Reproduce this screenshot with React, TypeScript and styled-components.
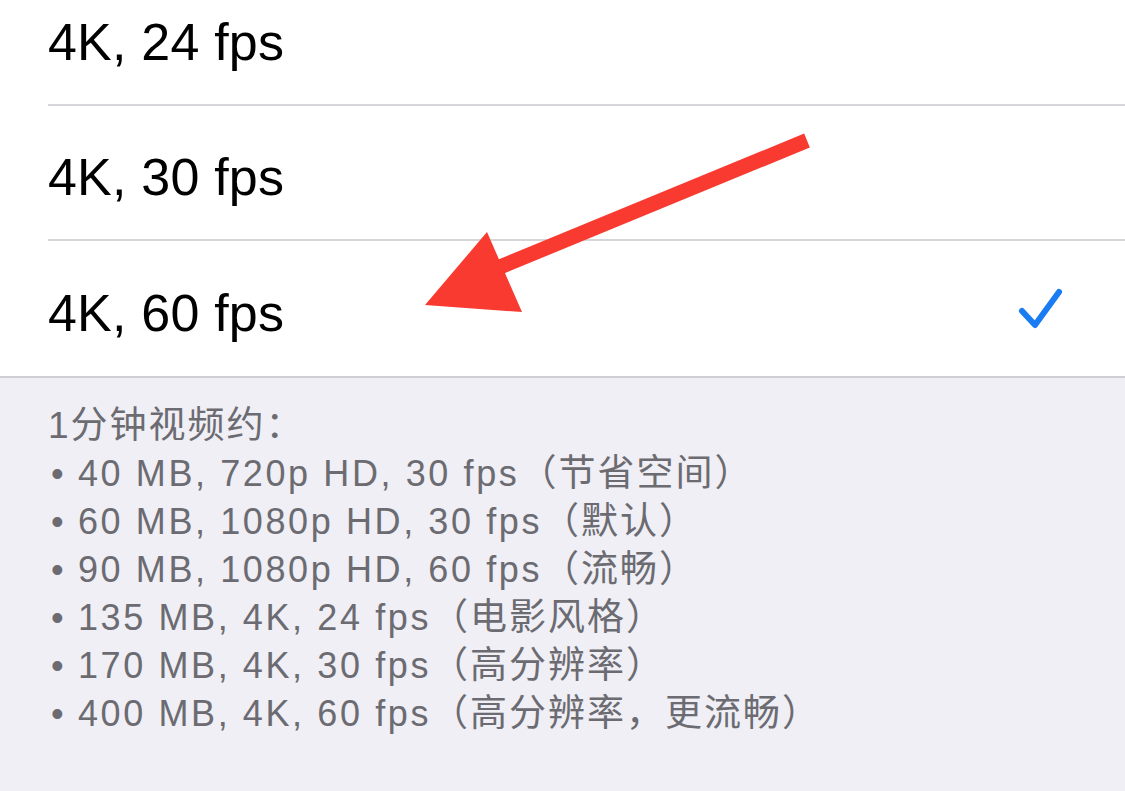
import React from 'react';
import styled, { createGlobalStyle } from 'styled-components';

const GlobalStyle = createGlobalStyle`
  html, body {
    margin: 0;
    padding: 0;
    background: #efeff5;
  }
  body {
    font-family: "Liberation Sans", "Noto Sans CJK SC", sans-serif;
    -webkit-font-smoothing: antialiased;
  }
`;

const Page = styled.div`
  position: relative;
  width: 1125px;
  height: 791px;
  overflow: hidden;
  background: #efeff5;
`;

const Group = styled.div`
  margin-top: -29px;
  background: #ffffff;
  border-bottom: 2px solid #cfcfd3;
`;

const Row = styled.div`
  height: 135px;
  padding-left: 48px;
  display: flex;
`;

const RowInner = styled.div<{ $last?: boolean }>`
  flex: 1;
  display: flex;
  align-items: center;
  justify-content: space-between;
  padding: 8px 62px 0 0;
  box-sizing: border-box;
  border-bottom: ${p => (p.$last ? 'none' : '2px solid #d6d6da')};
`;

const Label = styled.span`
  font-size: 52px;
  color: #000000;
  letter-spacing: 0.2px;
`;

const Check = styled.svg`
  width: 46px;
  height: 42px;
  margin-top: -8px;
`;

const Footer = styled.div`
  padding: 24px 48px 0;
  color: #6b6b71;
  font-size: 36px;
  line-height: 48px;
`;

const FooterLine = styled.div`
  white-space: nowrap;
`;

const Bullet = styled.span`
  display: inline-block;
  width: 30px;
  padding-left: 3px;
  box-sizing: border-box;
`;

const Spec = styled.span`
  letter-spacing: 2.6px;
`;

const Note = styled.span`
  font-size: 37px;
  letter-spacing: 2px;
`;

const ArrowLayer = styled.svg`
  position: absolute;
  left: 0;
  top: 0;
  width: 1125px;
  height: 791px;
  pointer-events: none;
`;

const options = [
  { label: '4K, 24 fps', selected: false },
  { label: '4K, 30 fps', selected: false },
  { label: '4K, 60 fps', selected: true },
];

const notes = [
  { spec: '40 MB, 720p HD, 30 fps', note: '（节省空间）' },
  { spec: '60 MB, 1080p HD, 30 fps', note: '（默认）' },
  { spec: '90 MB, 1080p HD, 60 fps', note: '（流畅）' },
  { spec: '135 MB, 4K, 24 fps', note: '（电影风格）' },
  { spec: '170 MB, 4K, 30 fps', note: '（高分辨率）' },
  { spec: '400 MB, 4K, 60 fps', note: '（高分辨率，更流畅）' },
];

const CheckMark = () => (
  <Check viewBox="0 0 46 42">
    <polyline
      points="5,23 18,37 42,4"
      fill="none"
      stroke="#1a7cf2"
      strokeWidth="6"
      strokeLinecap="round"
      strokeLinejoin="round"
    />
  </Check>
);

export default function App() {
  return (
    <Page>
      <GlobalStyle />
      <Group>
        {options.map((o, i) => (
          <Row key={o.label}>
            <RowInner $last={i === options.length - 1}>
              <Label>{o.label}</Label>
              {o.selected && <CheckMark />}
            </RowInner>
          </Row>
        ))}
      </Group>
      <Footer>
        <FooterLine>
          <Note>1分钟视频约：</Note>
        </FooterLine>
        {notes.map(n => (
          <FooterLine key={n.spec}>
            <Bullet>•</Bullet>
            <Spec>{n.spec}</Spec>
            <Note>{n.note}</Note>
          </FooterLine>
        ))}
      </Footer>

      {/* annotation arrow drawn over the screenshot */}
      <ArrowLayer viewBox="0 0 1125 791">
        <line x1="807" y1="140.5" x2="495" y2="269" stroke="#f83a30" strokeWidth="15" />
        <polygon points="425,305 487,232 522,312" fill="#f83a30" />
      </ArrowLayer>
    </Page>
  );
}
